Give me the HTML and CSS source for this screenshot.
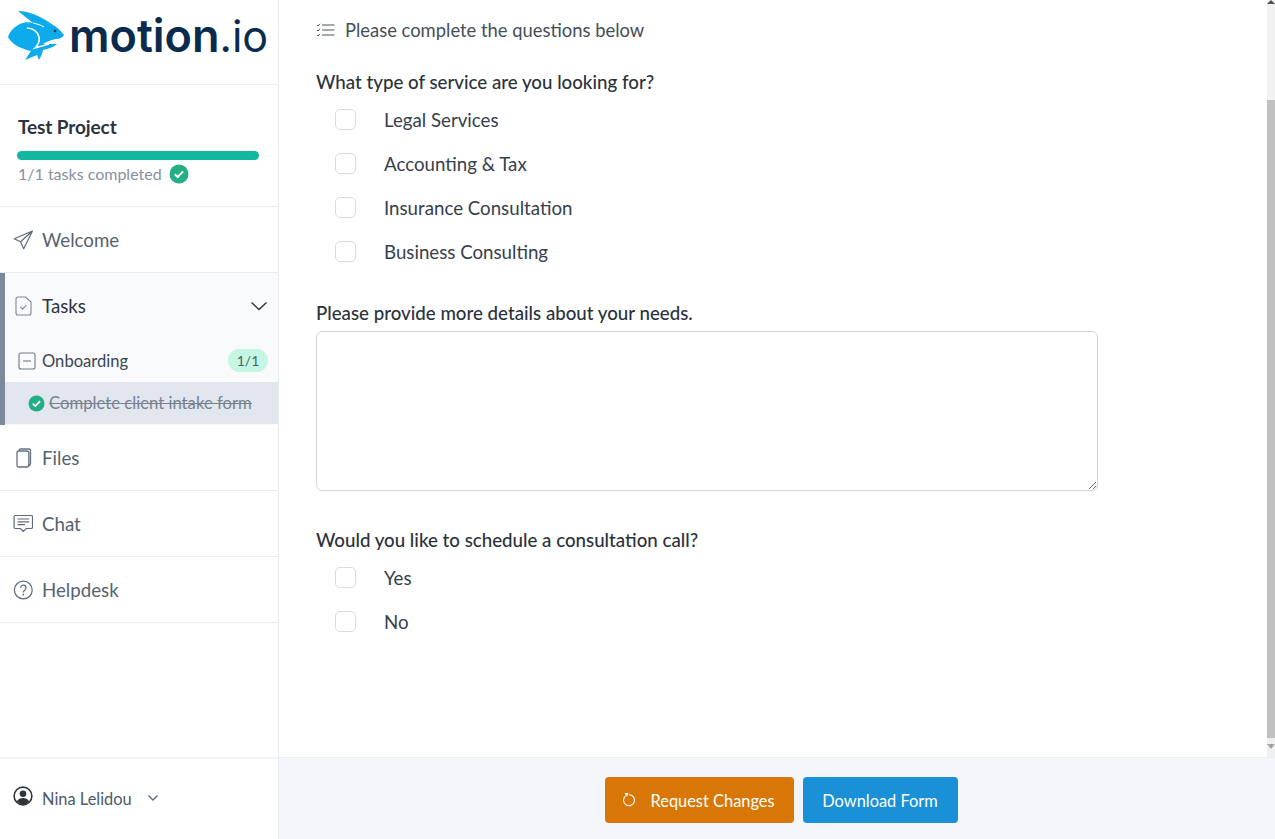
FILE: index.html
```html
<!DOCTYPE html>
<html lang="en">
<head>
<meta charset="utf-8">
<title>Client intake form</title>
<link rel="stylesheet" href="styles.css">
</head>
<body>
<div class="app">
  <aside class="sidebar">
    <div class="brand">
      <svg class="rabbit" width="58" height="52" viewBox="8 10 58 52">
        <path fill="#0dabeb" d="M8 37 C10 31 14 27 20 24 C24 22 29 22 33 23 C28 19 23 15 18 11 C25 11 32 13 38 16 C44 19 49 22 53 25 C57 27 61 31 64 35 C63 37 60 39 56 39 C50 40 46 42 43 44 L57 44 C54 47 48 49 43 50 L42 54 L39 60 L37 55 L25 60 L31 51 C22 49 12 45 8 37 Z"/>
        <path fill="none" stroke="#fff" stroke-width="1.600" d="M27 28 C33 28 38 32 39 37 C40 41 38 45 35 48 L49 44"/>
        <path fill="none" stroke="#fff" stroke-width="1" d="M33 23 C37 24 41 25 44 27"/>
        <circle cx="55" cy="31" r="1.300" fill="#08324f"/>
      </svg>
      <div class="wordmark">motion<span class="wordmark-io">.io</span></div>
    </div>

    <div class="project">
      <div class="project-name">Test Project</div>
      <div class="progress"></div>
      <div class="progress-text">
        <span>1/1 tasks completed</span>
        <svg width="20" height="20" viewBox="0 0 20 20"><circle cx="10" cy="10" r="9.500" fill="#23ae84"/><path d="M5.800 10.200l2.900 2.800 5.400-5.600" fill="none" stroke="#fff" stroke-width="2"/></svg>
      </div>
    </div>

    <nav>
      <div class="nav-item">
        <svg class="nav-icon" width="20" height="20" viewBox="0 0 20 20"><path d="M19.500 1 1.200 8.800l6.300 3 3.200 7zM7.500 11.800 19.500 1" fill="none" stroke="#5d6a7a" stroke-width="1.200" stroke-linejoin="round"/></svg>
        <span>Welcome</span>
      </div>
      <div class="tasks">
        <div class="tasks-head">
          <svg class="nav-icon" width="20" height="20" viewBox="0 0 20 20"><path d="M5 1h7.500L18 6v11a2 2 0 0 1-2 2H5a2 2 0 0 1-2-2V3a2 2 0 0 1 2-2zM7.500 11l2.200 2.200 3.600-4.200" fill="none" stroke="#7d8794" stroke-width="1.100"/></svg>
          <span>Tasks</span>
          <svg class="chevron" width="18" height="10" viewBox="0 0 18 10"><path d="M1.500 1.500 9 8.500l7.500-7" fill="none" stroke="#2b3440" stroke-width="1.400"/></svg>
        </div>
        <div class="group">
          <svg width="18" height="18" viewBox="0 0 18 18"><rect x="1" y="1" width="16" height="16" rx="2" fill="none" stroke="#6e7886" stroke-width="1.100"/><path d="M5 9h8" stroke="#6e7886" stroke-width="1.100"/></svg>
          <span class="group-name">Onboarding</span>
          <span class="badge">1/1</span>
        </div>
        <div class="task-row">
          <svg width="17" height="17" viewBox="0 0 17 17"><circle cx="8.500" cy="8.500" r="8" fill="#23ae84"/><path d="M4.800 8.700l2.500 2.400 4.800-4.900" fill="none" stroke="#fff" stroke-width="1.800"/></svg>
          <span class="task-done">Complete client intake form</span>
        </div>
      </div>
      <div class="nav-item">
        <svg class="nav-icon" width="20" height="20" viewBox="0 0 20 20"><path d="M6 3.500V2.700A1.700 1.700 0 0 1 7.700 1h8.100a1.700 1.700 0 0 1 1.700 1.700v12.800a3 3 0 0 1-1.500 2.500M6 3h7.800a2 2 0 0 1 2 2v12a2 2 0 0 1-2 2H6a2 2 0 0 1-2-2V5a2 2 0 0 1 2-2z" fill="none" stroke="#667282" stroke-width="1.300"/></svg>
        <span>Files</span>
      </div>
      <div class="nav-item">
        <svg class="nav-icon" width="20" height="20" viewBox="0 0 20 20"><path d="M2.300 1.500h16a1.200 1.200 0 0 1 1.200 1.200v10.600a1.200 1.200 0 0 1-1.200 1.200h-5.100l-2.900 3-2.900-3H2.300a1.200 1.200 0 0 1-1.200-1.200V2.700a1.200 1.200 0 0 1 1.200-1.200zM4.500 5h11.600M4.500 7.800h11.600M4.500 10.600h7.500" fill="none" stroke="#5d6a7a" stroke-width="1.200"/></svg>
        <span>Chat</span>
      </div>
      <div class="nav-item">
        <svg class="nav-icon" width="20" height="20" viewBox="0 0 20 20"><circle cx="10.300" cy="10" r="8.900" fill="none" stroke="#5d6a7a" stroke-width="1.200"/><path d="M7.600 7.800a2.700 2.700 0 1 1 4.300 2.200c-1 .7-1.600 1.200-1.600 2.400" fill="none" stroke="#5d6a7a" stroke-width="1.300"/><circle cx="10.300" cy="14.700" r=".9" fill="#5d6a7a"/></svg>
        <span>Helpdesk</span>
      </div>
    </nav>

    <div class="user">
      <svg class="user-icon" width="20" height="20" viewBox="0 0 20 20"><circle cx="10" cy="10" r="8.900" fill="#fff" stroke="#2f3439" stroke-width="1.600"/><circle cx="10" cy="7.800" r="3.300" fill="#2f3439"/><path d="M3.800 15.500c1.500-2.700 3.700-3.500 6.200-3.500s4.700.8 6.200 3.500a8.500 8.500 0 0 1-12.400 0z" fill="#2f3439"/></svg>
      <span class="user-name">Nina Lelidou</span>
      <svg width="12" height="8" viewBox="0 0 12 8"><path d="M1.500 1.500 6 6l4.500-4.500" fill="none" stroke="#5d6a7a" stroke-width="1.300"/></svg>
    </div>
  </aside>

  <div class="main">
    <div class="workspace">
      <main class="content">
        <div class="intro">
          <svg width="19" height="14" viewBox="0 0 19 14"><path d="M6 2h12.500M6 7h12.500M6 12h12.500" stroke="#4a5460" stroke-width="1.200" fill="none"/><path d="M1 2l1 1 2-2.200M1 7l1 1 2-2.200M1 12l1 1 2-2.200" stroke="#4a5460" stroke-width="1" fill="none"/></svg>
          <span>Please complete the questions below</span>
        </div>

        <h2 class="question first">What type of service are you looking for?</h2>
        <div class="options">
          <label class="option"><span class="box"></span>Legal Services</label>
          <label class="option"><span class="box"></span>Accounting &amp; Tax</label>
          <label class="option"><span class="box"></span>Insurance Consultation</label>
          <label class="option"><span class="box"></span>Business Consulting</label>
        </div>

        <h2 class="question second">Please provide more details about your needs.</h2>
        <textarea class="details" aria-label="Details"></textarea>

        <h2 class="question third">Would you like to schedule a consultation call?</h2>
        <div class="options">
          <label class="option"><span class="box"></span>Yes</label>
          <label class="option"><span class="box"></span>No</label>
        </div>
      </main>
      <div class="scrollbar">
        <div class="arrow-up"></div>
        <div class="track-top"></div>
        <div class="thumb"></div>
        <div class="arrow-down"></div>
      </div>
    </div>
    <footer class="actions">
      <button class="btn btn-orange">
        <svg width="16" height="16" viewBox="0 0 16 16"><path d="M4.600 3.900a5.500 5.500 0 1 0 3.400-1.200" fill="none" stroke="#fff" stroke-width="1.100"/><path d="M3.500 1.200 7.700 .8 6 4.800z" fill="#fff"/></svg>
        <span>Request Changes</span>
      </button>
      <button class="btn btn-blue">Download Form</button>
    </footer>
  </div>
</div>
</body>
</html>
```
FILE: styles.css
```css
* { box-sizing: border-box; }
html, body { height: 100%; margin: 0; }
body {
  font-family: Lato, "Liberation Sans", sans-serif;
  color: #2b3440;
  background: #fff;
  overflow: hidden;
}
.app { display: flex; width: 1275px; height: 839px; }

.sidebar {
  width: 279px;
  flex: none;
  display: flex;
  flex-direction: column;
  border-right: 1px solid #e9ebf1;
}
.brand {
  height: 85px;
  flex: none;
  display: flex;
  align-items: flex-start;
  padding: 10px 0 0 8px;
  border-bottom: 1px solid #e9edf3;
}
.rabbit { flex: none; }
.wordmark {
  margin: 0 0 0 3px;
  font-family: Inter, Lato, sans-serif;
  font-size: 45px;
  line-height: 52px;
  font-weight: 600;
  color: #0b2b4c;
  white-space: nowrap;
}
.wordmark-io { font-weight: 400; font-size: 43px; }

.project {
  height: 122px;
  flex: none;
  padding: 30px 19px 0 17px;
  border-bottom: 1px solid #e9ebf1;
}
.project-name { padding-left: 1px; font-size: 19px; line-height: 24px; font-weight: 700; color: #2b3440; letter-spacing: -.1px; }
.progress { height: 9px; margin-top: 12px; border-radius: 5px; background: #12b7a0; }
.progress-text {
  display: flex;
  align-items: center;
  gap: 7px;
  margin-top: 3px;
  padding-left: 1px;
  font-size: 16px;
  line-height: 22px;
  color: #87919f;
}

.nav-item {
  height: 66px;
  display: flex;
  align-items: center;
  gap: 9px;
  padding-left: 13px;
  font-size: 18.7px;
  color: #56626f;
  border-bottom: 1px solid #e9ebf1;
}
.nav-icon { flex: none; }
.tasks {
  height: 152px;
  background: #f9fafc;
  border-left: 5px solid #7c8a9a;
}
.tasks-head {
  height: 66px;
  display: flex;
  align-items: center;
  gap: 9px;
  padding: 0 10px 0 8px;
  font-size: 18.7px;
  color: #2b3440;
}
.chevron { margin-left: auto; }
.group {
  height: 43px;
  display: flex;
  align-items: center;
  gap: 6px;
  padding: 0 10px 0 13px;
  font-size: 16.6px;
  color: #3b4552;
}
.group-name { flex: 1; }
.badge {
  width: 40px;
  height: 23px;
  border-radius: 12px;
  background: #c5f5e3;
  color: #3f6a63;
  font-size: 14px;
  line-height: 23px;
  text-align: center;
}
.task-row {
  height: 42px;
  display: flex;
  align-items: center;
  gap: 4px;
  padding-left: 23px;
  background: #e2e6ee;
  font-size: 16.7px;
  color: #78828f;
}
.task-done { text-decoration: line-through; }
.user {
  margin-top: auto;
  height: 82px;
  flex: none;
  display: flex;
  align-items: center;
  gap: 9px;
  padding: 0 0 2px 13px;
  border-top: 2px solid #f1f3f7;
  font-size: 16.4px;
  color: #4d5a6b;
}
.user-icon { margin-top: -4px; }
.user-name { margin-right: 6px; }

.main { flex: 1; min-width: 0; display: flex; flex-direction: column; }
.workspace { flex: 1; min-height: 0; display: flex; }
.content { flex: 1; min-width: 0; padding: 18px 0 0 37px; }
.intro {
  display: flex;
  align-items: center;
  gap: 10px;
  height: 24px;
  font-size: 18.4px;
  color: #444e5a;
}
.question {
  margin: 0;
  font-size: 18.7px;
  line-height: 24px;
  font-weight: 500;
  color: #2b323c;
}
.question.first { margin-top: 28px; }
.question.second { margin-top: 27px; }
.question.third { margin-top: 37px; }
.options { display: flex; flex-direction: column; margin-top: 4px; padding-left: 19px; }
.option {
  display: flex;
  align-items: center;
  height: 44px;
  gap: 28px;
  font-size: 18.7px;
  color: #36404c;
}
.box {
  width: 21px;
  height: 21px;
  margin-top: -2px;
  border: 1px solid #d6dce6;
  border-radius: 5px;
  background: #fff;
}
.details {
  display: block;
  width: 782px;
  height: 160px;
  margin-top: 6px;
  border: 1px solid #d0d5dd;
  border-radius: 6px;
  background: #fff;
  outline: none;
}

.scrollbar {
  width: 8px;
  flex: none;
  display: flex;
  flex-direction: column;
  align-items: center;
  background: #f1f1f1;
}
.arrow-up {
  width: 0;
  height: 0;
  border: solid transparent;
  border-width: 0 4px 4px;
  border-bottom-color: #505050;
}
.track-top { height: 96px; flex: none; }
.thumb { width: 8px; height: 638px; flex: none; background: #c1c1c1; }
.arrow-down {
  margin-top: 6px;
  width: 0;
  height: 0;
  border: solid transparent;
  border-width: 5px 4px 0;
  border-top-color: #a3a3a3;
}

.actions {
  height: 82px;
  flex: none;
  display: flex;
  justify-content: center;
  align-items: flex-start;
  gap: 9px;
  padding: 19px 0 0 8px;
  background: #f4f6fb;
  border-top: 1px solid #eceef3;
}
.btn {
  height: 46px;
  border: 0;
  border-radius: 4px;
  display: flex;
  align-items: center;
  font-family: inherit;
  font-size: 16.4px;
  color: #fff;
}
.btn-orange { width: 189px; padding-left: 16px; gap: 14px; background: #d97706; }
.btn-blue { width: 155px; justify-content: center; background: #1a91d6; }
```
